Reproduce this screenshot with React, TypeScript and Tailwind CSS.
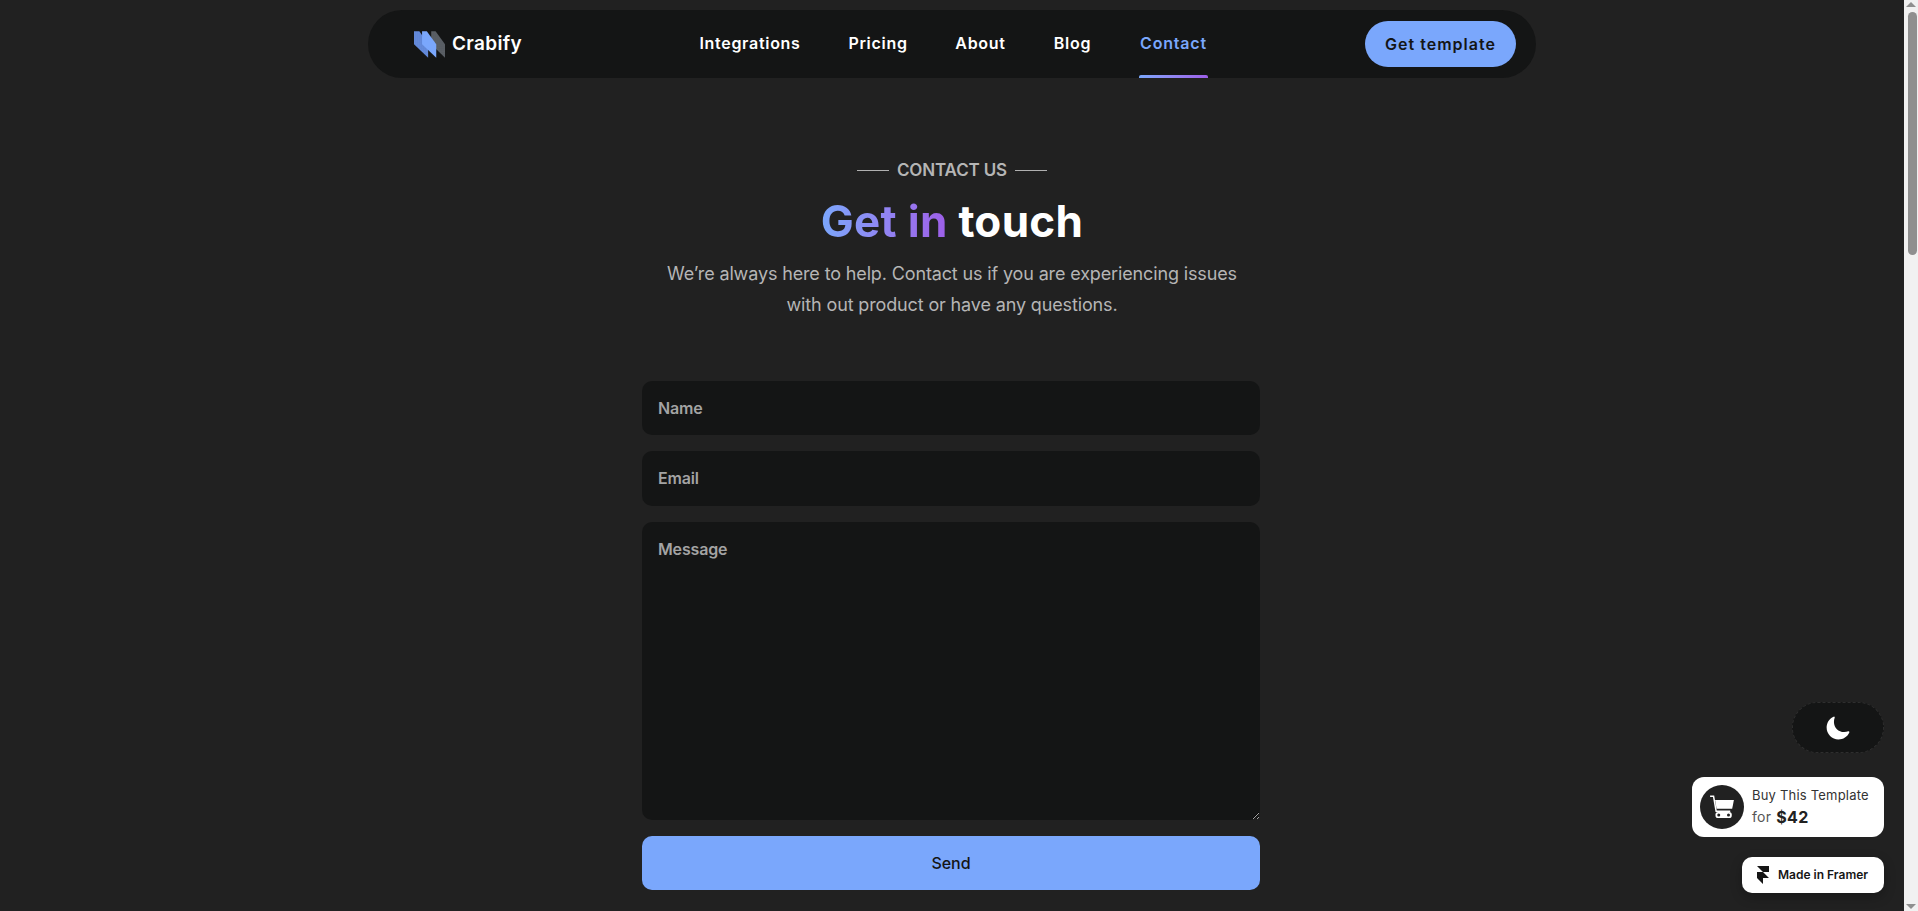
import { IoMoon } from "react-icons/io5";

const NAV_LINKS = [
  { label: "Integrations", width: "w-[102px]" },
  { label: "Pricing", width: "w-[58px]" },
  { label: "About", width: "w-[51px]" },
  { label: "Blog", width: "w-[37px]" },
];

function Logo() {
  return (
    <svg width="31" height="27" viewBox="42 33 92 79">
      <defs>
        <pattern id="dots" width="6" height="6" patternUnits="userSpaceOnUse">
          <circle cx="2" cy="2" r="1" fill="#ffffff" fillOpacity="0.18" />
        </pattern>
      </defs>
      <polygon points="93,33 106,33 134,72 134,112 93,72" fill="#555a60" />
      <polygon points="93,33 106,33 134,72 134,112 93,72" fill="url(#dots)" />
      <polygon points="42,33 58,33 84,72 84,112 42,72" fill="#5f86d8" />
      <polygon points="42,33 58,33 84,72 84,112 42,72" fill="url(#dots)" />
      <polygon points="66,33 80,33 108,72 108,112 66,72" fill="#7aa7fc" />
    </svg>
  );
}

function CartIcon() {
  return (
    <svg width="26" height="26" viewBox="0 0 24 24" fill="none">
      <path d="M1 2h3.2l2.4 14h13" stroke="#fff" strokeWidth="1.4" />
      <path d="M5.6 5.6H23l-1.6 8H7z" fill="#fff" />
      <rect x="6" y="16.6" width="15" height="5.6" rx="2.4" fill="#fff" />
      <circle cx="9" cy="19.4" r="1.4" fill="#212121" />
      <circle cx="18" cy="19.4" r="1.4" fill="#212121" />
    </svg>
  );
}

function FramerIcon() {
  return (
    <svg width="12" height="18" viewBox="0 0 16 24" fill="#161616">
      <path d="M0 0h16v8H8zM0 8h8l8 8H8v8l-8-8z" />
    </svg>
  );
}

export default function App() {
  return (
    <div className="relative flex h-[911px] w-full overflow-hidden bg-[#212121] font-['Inter',sans-serif]">
      <main className="flex flex-1 flex-col items-center pt-[10px]">
        {/* Nav */}
        <nav className="relative flex h-[68px] w-[1168px] shrink-0 items-center justify-between rounded-full bg-[#141515] pl-[46px] pr-[20px]">
          <a className="flex items-center gap-[7px]">
            <Logo />
            <span className="text-[19px] font-semibold tracking-[0.35px] text-white">Crabify</span>
          </a>
          <div className="absolute left-[331px] top-0 flex h-full items-center gap-[48px]">
            {NAV_LINKS.map((link) => (
              <a
                key={link.label}
                className={`${link.width} flex justify-center whitespace-nowrap pb-[2px] text-[16px] font-semibold tracking-[0.7px] text-white`}
              >
                {link.label}
              </a>
            ))}
            <a className="relative flex h-full w-[69px] items-center justify-center whitespace-nowrap pb-[2px] text-[16px] font-semibold tracking-[0.8px] text-[#7aa7fc]">
              Contact
              <span className="absolute bottom-0 left-0 h-[3px] w-full rounded-t-[2px] bg-gradient-to-r from-[#7aa7fc] to-[#9d5ee8]" />
            </a>
          </div>
          <button className="flex h-[46px] w-[151px] items-center justify-center rounded-full bg-[#7aa7fc] pb-[1px] text-[16px] font-semibold tracking-[1px] text-[#141515]">
            Get template
          </button>
        </nav>

        {/* Heading */}
        <div className="mt-[81px] flex items-center gap-[8px]">
          <span className="h-px w-[32px] bg-[#b0b0b0]" />
          <span className="text-[17px] font-semibold leading-[22px] tracking-[-0.15px] text-[#b5b5b5]">CONTACT US</span>
          <span className="h-px w-[32px] bg-[#b0b0b0]" />
        </div>
        <h1 className="mt-[14px] text-[44px] font-bold leading-[53px] tracking-[0.3px] text-white">
          <span className="bg-gradient-to-r from-[#7aa7fc] to-[#9d5ee8] bg-clip-text text-transparent">Get in</span> touch
        </h1>
        <p className="mt-[10px] text-center text-[18px] leading-[31px] tracking-[-0.14px] text-[#b5b5b5]">
          We’re always here to help. Contact us if you are experiencing issues
          <br />
          with out product or have any questions.
        </p>

        {/* Form */}
        <form className="mr-[2px] mt-[61px] flex w-[618px] flex-col gap-[16px]">
          <input
            placeholder="Name"
            className="h-[54px] rounded-[10px] bg-[#141515] px-[16px] text-[16px] font-semibold tracking-[-0.15px] text-white outline-none placeholder:text-[#a3a3a3]"
          />
          <input
            placeholder="Email"
            className="h-[55px] rounded-[10px] bg-[#141515] px-[16px] pb-[2px] text-[16px] font-semibold tracking-[-0.15px] text-white outline-none placeholder:text-[#a3a3a3]"
          />
          <textarea
            placeholder="Message"
            className="h-[298px] rounded-[10px] bg-[#141515] px-[16px] pb-[16px] pt-[17px] text-[16px] font-semibold leading-[20px] tracking-[-0.15px] text-white outline-none placeholder:text-[#a3a3a3]"
          />
          <button type="button" className="h-[54px] rounded-[10px] bg-[#7aa7fc] text-[16px] font-medium text-[#141515]">
            Send
          </button>
        </form>
      </main>

      {/* Scrollbar */}
      <div className="flex w-[14px] shrink-0 flex-col items-center bg-[#f1f1f1]">
        <div className="mt-[2px] h-0 w-0 border-x-[5px] border-b-[5px] border-x-transparent border-b-[#8f8f8f]" />
        <div className="ml-[2px] mt-[5px] h-[243px] w-[9px] rounded-[5px] bg-[#8f8f8f]" />
        <div className="mb-[2px] mt-auto h-0 w-0 border-x-[5px] border-t-[5px] border-x-transparent border-t-[#8f8f8f]" />
      </div>

      {/* Floating widgets */}
      <div className="absolute right-[34px] top-[702px] flex flex-col items-end">
        <button className="flex h-[51px] w-[92px] items-center justify-center rounded-full border border-dashed border-[#2e2e2e] bg-[#141515]">
          <IoMoon className="h-[26px] w-[26px] text-white" />
        </button>
        <a className="mt-[24px] flex h-[60px] w-[192px] items-center gap-[8px] rounded-[12px] bg-white pl-[8px]">
          <span className="flex h-[44px] w-[44px] items-center justify-center rounded-full bg-[#212121]">
            <CartIcon />
          </span>
          <span className="flex flex-col">
            <span className="-mt-[2px] text-[13px] leading-[18px] tracking-[0.2px] text-[#333333]">Buy This Template</span>
            <span className="mt-[3px] flex items-center gap-[5px] text-[14px] leading-[20px] tracking-[0.3px] text-[#555555]">
              for <span className="text-[16px] font-bold text-[#212121]">$42</span>
            </span>
          </span>
        </a>
        <a className="mt-[20px] flex h-[36px] w-[142px] items-center gap-[9px] rounded-[10px] bg-white pl-[15px] shadow-[0_4px_12px_rgba(0,0,0,0.25)]">
          <FramerIcon />
          <span className="whitespace-nowrap text-[12px] font-semibold text-[#161616]">Made in Framer</span>
        </a>
      </div>
    </div>
  );
}
